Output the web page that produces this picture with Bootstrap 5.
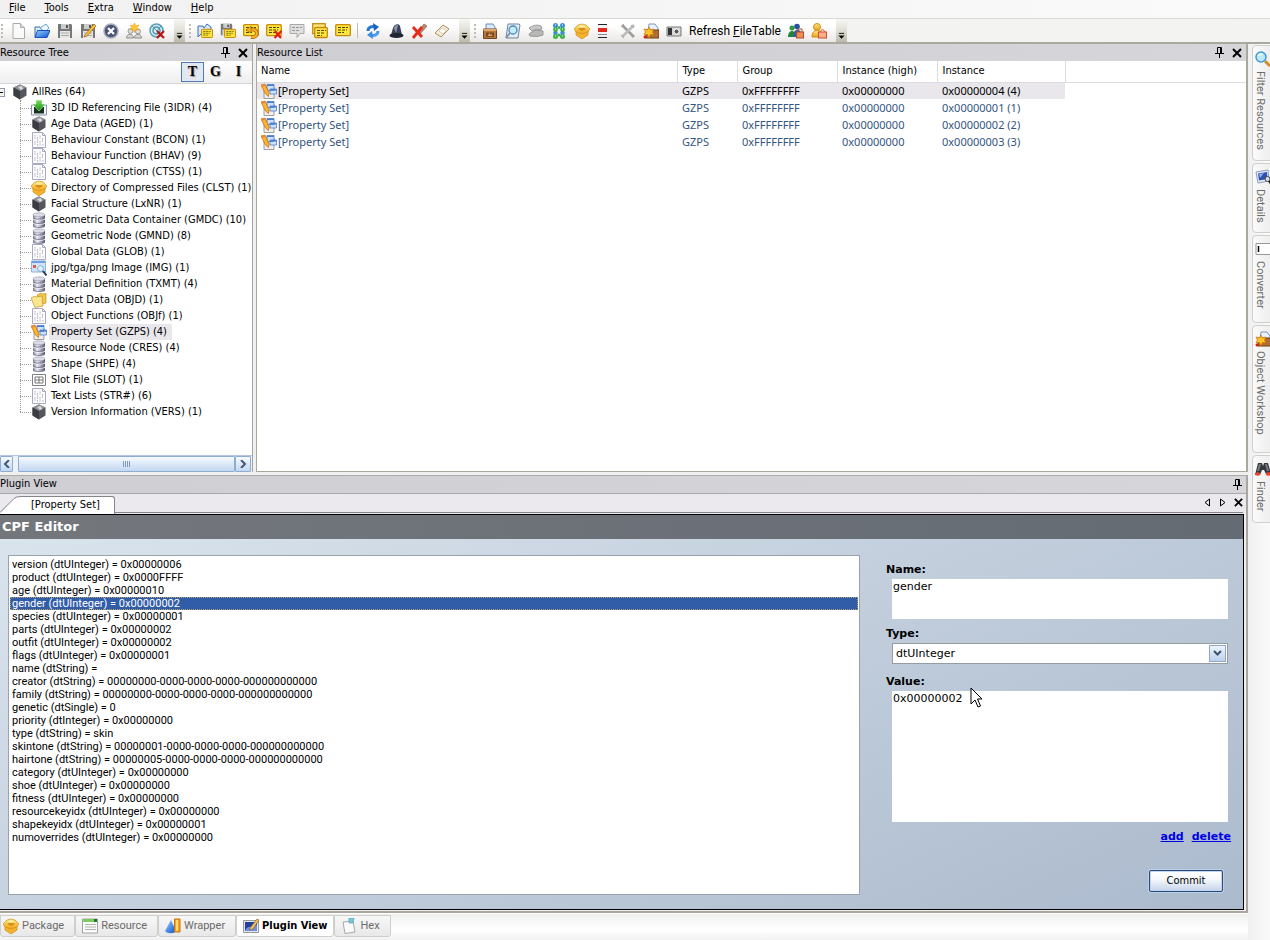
<!DOCTYPE html>
<html lang="en">
<head>
<meta charset="utf-8">
<meta name="viewport" content="width=device-width, initial-scale=1">
<title>Package editor</title>
<link rel="stylesheet" href="https://cdn.jsdelivr.net/npm/bootstrap@5.3.0/dist/css/bootstrap.min.css">
<style>
:root{--tahoma:"DejaVu Sans Condensed","DejaVu Sans",sans-serif;--gothic:Roboto,"Liberation Sans",sans-serif;--verdana:"DejaVu Sans",sans-serif}
body{font:11px/16px var(--tahoma);color:#000;background:#f1f0f0;overflow:hidden}
button{border:0;background:none;padding:0;color:inherit;font:inherit}
svg{display:block;flex:none}
.ico{width:16px;height:16px}
.menubar{height:18px;background:linear-gradient(90deg,#f2f1f1,#fafafa);padding:0 9px;gap:19px;line-height:15px}
.menubar a,.menubar a:hover{color:#000;text-decoration:none}
.tools{height:26px;background:linear-gradient(#fff 30%,#f6f5f4 60%,#e9e8e6);border-top:1px solid #d8d8d5;border-bottom:2px solid #aaa9a0}
.rest{background:#f3f3f2}
.tbtn{width:23px;height:23px;display:flex;align-items:center;justify-content:center}
.tbtn.wide{width:99px;font:12px/16px var(--gothic);justify-content:flex-start;padding-left:4px;white-space:nowrap}
.grip{width:5px;align-self:center;height:14px;background:repeating-linear-gradient(#bdbdbb 0 2px,transparent 2px 4px);background-size:2px 14px;background-repeat:no-repeat;background-position:1px 0}
.grip.near{margin:0 2px 0 0}
.rule{width:1px;height:15px;background:#bcbcb8;align-self:center;margin:0 3px}
.more{width:11px;height:23px;background:linear-gradient(#f6f6f2,#deddd4 55%,#bbb9aa);display:flex;align-items:flex-end;justify-content:center;padding-bottom:2px;margin:0 3px 0 6px}
.upper{flex:429 1 0;gap:3px;min-height:0}
.lower{flex:437 1 0;min-height:0;margin-top:3px;border-top:1px solid #aeada5;border-right:2px solid #aaa69f;border-bottom:2px solid #aaa69f}
.treepane{flex:0 0 253px;border-right:1px solid #a5a59c;background:#fff}
.listpane{border:1px solid #a9a89d;border-width:0 2px 1px 1px;background:#fff}
.caption{height:17px;background:linear-gradient(90deg,#cfced3,#d6d5d9);line-height:16px;flex:none}
.treebar{height:23px;background:linear-gradient(#fff,#efeef0);border-bottom:1px solid #d5d4d8;flex:none;padding-right:2px}
.letter{width:23px;height:20px;font:bold 14px/18px "Liberation Serif",serif;text-shadow:1px 1px 1px #999}
.letter.on{border:1px solid #5179ad;background:#e2e8f2}
.tree{padding-top:0;line-height:16px;white-space:nowrap}
.tree ul{position:relative}
.tree .root{padding-left:12px}
.tree .kids li{display:flex;padding-left:31px;position:relative;height:16px}
.tree .kids li::before{content:"";position:absolute;left:20px;width:11px;top:8px;border-top:1px dotted #999}
.tree .kids::before{content:"";position:absolute;left:20px;top:0;bottom:8px;border-left:1px dotted #999}
.tree a,.tree a:hover{color:#000;text-decoration:none;padding:0 5px 0 2px;margin-left:2px}
.tree a.on{background:#e9e7eb}
.box{width:9px;height:9px;border:1px solid #8c99ac;background:#f4f4f0;position:absolute;left:-4px;top:4px}
.box::after{content:"";position:absolute;left:1px;right:1px;top:3px;border-top:1px solid #000}
.hbar{height:17px;background:#edf1f8;border-top:1px solid #b7c6db;flex:none;padding-right:1px}
.hbar button{border:1px solid #8eabd0;background:linear-gradient(#f6faff,#c3d7f1);border-radius:1px;display:flex;align-items:center;justify-content:center}
.hbar .end{width:16px}
.hbar .first{width:13px;margin-right:5px}
.rtable{table-layout:fixed;width:100%;font:11px/17px "Noto Sans",sans-serif;color:#33557f;white-space:nowrap}
.rtable th{font:11px/20px var(--tahoma);color:#000;height:21px;padding:0 0 0 5px;border-bottom:1px solid #dcdbdd;border-right:1px solid #dcdbdd}
.rtable th:first-child,.rtable td:first-child{padding-left:4px}
.rtable th:last-child{border-right:0}
.rtable td{height:17px;padding:0 0 0 5px;line-height:16px}
.rtable tr.on td:not(:last-child){background:#e9e7eb;color:#000}
.rtable .cell{gap:1px}
.doctabs{height:21px;background:#ebe9ed;border-top:1px solid #a9a8ae;flex:none;padding-right:3px}
.doctabs .line{border-bottom:1px solid #85848a;height:19px}
.tabface{background:#fff;border:1px solid #85848a;border-width:1px 1px 0 0;border-radius:0 3px 0 0;height:18px;line-height:16px;width:94px;padding-left:10px;margin-top:2px;text-align:left;display:block}
.editor{border:1px solid #000;border-left:0;margin:0 2px 1px 0;background:linear-gradient(155deg,#dbe5ee,#c2cedc 50%,#abbacd);min-height:0}
.editor h1{font:bold 13px/24px var(--verdana);color:#fff;background:linear-gradient(90deg,#73777c,#6b7078 60%,#646b73);margin:0;padding-left:2px;height:24px}
.work{padding:16px 12px 14px 8px;gap:26px;min-height:0}
.props{border:1px solid #9aa2ab;background:#fff;padding:2px 1px;font:11px/13px var(--gothic);overflow:hidden;margin:0}
.props li{padding-left:2px;height:13px;white-space:pre}
.props li.on{background:#315da8;color:#fff;outline:1px dotted #b3a16d;outline-offset:-1px}
.fields{flex:0 0 344px;font:11px/14px var(--verdana);padding-top:8px}
.fields label{font-weight:bold;height:16px;display:block}
.fields textarea,.fields .combo{margin:0 3px 0 6px;display:block;width:336px;border:0;background:#fff;resize:none;padding:1px 1px;font:11px/13px var(--verdana);border-radius:0;color:#000;outline:0}
.fields .combo{border:1px solid #969ca4;height:21px;display:flex;padding:0;margin-bottom:11px}
.fields .short{height:40px;margin-bottom:8px}
.fields .tall{height:131px;margin-bottom:8px}
.combo select{appearance:none;border:0;outline:0;background:#fff;flex:1;padding:0 3px;font:inherit;min-width:0}
.combo span{width:17px;margin:1px;border:1px solid #90a9ca;background:linear-gradient(#eef4fc,#bcd0ea);display:flex;align-items:center;justify-content:center}
.fields .links{gap:8px;font-weight:bold}
.fields .links a{color:#0000e6}
.commit{width:74px;height:22px;margin:26px 8px 0 auto;border:1px solid #294a7c;border-radius:2px;background:linear-gradient(#fff,#f6f9fd 40%,#c5d3e8);box-shadow:inset 0 0 0 1px #c3d5ef,0 0 0 1px #bfcfe3;font:11px/18px var(--tahoma)}
.views{height:27px;background:linear-gradient(#f0f0f0,#fff 60%,#f2f2f2);flex:none;border-top:1px solid #fff}
.views button,.side button{color:#6b6b6b;background:linear-gradient(#f7f7f7,#f0f0f0 50%,#e8e8e8);border:1px solid #cfcfcb;font:11px/16px var(--gothic)}
.views button{height:22px;margin:1px 0 0;display:flex;align-items:center;gap:3px;border-radius:0 0 3px 3px;padding:0 10px 0 6px;white-space:nowrap}
.views button:first-child{padding-left:2px}
.views button.on{background:#fff;color:#000;font:bold 11px/16px var(--tahoma);padding-right:6px}
.side{flex:0 0 22px;overflow:hidden;padding:1px 0 0 4px;background:linear-gradient(90deg,#f0f0f0,#fafafa)}
.side button{width:26px;border-radius:4px 0 0 4px;display:flex;flex-direction:column;align-items:flex-start;padding:5px 0 0 2px;gap:4px;margin-bottom:2px;background:linear-gradient(90deg,#fafafa,#e9e9e9)}
.side span{writing-mode:vertical-rl;line-height:13px;white-space:nowrap;margin-left:-1px}
.pointer{position:absolute;left:84px;top:12px}
</style>
</head>
<body class="d-flex flex-column vh-100">

<svg width="0" height="0" class="position-absolute" aria-hidden="true">
<defs>
<linearGradient id="gy" x2="0" y2="1"><stop stop-color="#ffe884"/><stop offset="1" stop-color="#f0a018"/></linearGradient>
<linearGradient id="gb" x2="1" y2="1"><stop stop-color="#9fd4ff"/><stop offset="1" stop-color="#0a50d0"/></linearGradient>
<linearGradient id="gc"><stop stop-color="#77778f"/><stop offset=".35" stop-color="#f0f0f8"/><stop offset="1" stop-color="#55556e"/></linearGradient>
<linearGradient id="gg" x2="0" y2="1"><stop stop-color="#7be05a"/><stop offset="1" stop-color="#0f8a10"/></linearGradient>
</defs>
<symbol id="new" viewBox="0 0 16 16"><path d="M2 .5h7.5l4 4v11H2z" fill="#fafafa" stroke="#aaa"/><path d="M9.500 .5v4h4" fill="#e4e4e4" stroke="#aaa"/></symbol>
<symbol id="open" viewBox="0 0 16 16"><path d="M1 14V4h5l1 2h6v8z" fill="#dceaf8" stroke="#3970ae"/><path d="M6 5l6-4 3 4-4 4z" fill="#eef6ff" stroke="#6aa2d8"/><path d="M1 14.500l2.500-7H16l-3 7z" fill="url(#gb)" stroke="#1550b8"/></symbol>
<symbol id="save" viewBox="0 0 16 16"><path d="M1 1h13l1 1v13H1z" fill="#777"/><path d="M4 1h8v5H4z" fill="#ccc"/><path d="M9 2h2v3H9z" fill="#555"/><path d="M3 8h10v7H3z" fill="#e6e6e6"/><path d="M4 10h8M4 12.500h8" stroke="#aaa"/></symbol>
<symbol id="saveas" viewBox="0 0 16 16"><use href="#save"/><path d="M5 12L14 1l2 2-9 10-3 1z" fill="#ffc13a" stroke="#9a6410" stroke-width=".7"/></symbol>
<symbol id="stop" viewBox="0 0 16 16"><circle cx="8" cy="8" r="7" fill="#4c5576" stroke="#a8aebc" stroke-width="1.500"/><path d="M5 5l6 6M11 5l-6 6" stroke="#fff" stroke-width="2.200"/></symbol>
<symbol id="users" viewBox="0 0 16 16"><circle cx="4.500" cy="8" r="2.500" fill="#ddd" stroke="#999"/><circle cx="12" cy="8.500" r="2.500" fill="#ddd" stroke="#999"/><path d="M.5 15c0-5 7-5 7 0zM8.500 15c0-5 7-5 7 0z" fill="#d4d4d4" stroke="#8f8f8f"/><path d="M8.500 0l1.300 2.600 3-.6-1.600 2.500 1.600 2.500-3-.4L8.500 9.500 7.200 6.600l-3 .4 1.600-2.500L4.200 2l3 .6z" fill="#ffc62e" stroke="#e89a18" stroke-width=".5"/></symbol>
<symbol id="target" viewBox="0 0 16 16"><circle cx="7.500" cy="7.500" r="6.500" fill="#d5edf5" stroke="#5d9fb6" stroke-width="1.500"/><circle cx="7.500" cy="7.500" r="3.500" fill="none" stroke="#4a98b5" stroke-width="1.500"/><path d="M3 3l5 5 4-5" fill="none" stroke="#5b8fa2"/><path d="M8 8l7 7M15 8l-7 7" stroke="#b81414" stroke-width="2.200"/></symbol>
<symbol id="nt" viewBox="0 0 16 16"><rect x=".7" y="1.700" width="14.600" height="11" rx="1" fill="#ffe63a" stroke="#c78a10" stroke-width="1.300"/><path d="M3 4.500h10M3 7h9M3 9.500h6" stroke="#4f4400" stroke-dasharray="3 1"/></symbol>
<symbol id="ntopen" viewBox="0 0 16 16"><path d="M1 14V3h5l1 2 3-4 4 3v6H5z" fill="#d8e8fa" stroke="#3e6db0"/><svg x="4" y="5" width="12" height="12"><use href="#nt"/></svg></symbol>
<symbol id="ntsave" viewBox="0 0 16 16"><svg width="13" height="13"><use href="#save"/></svg><svg x="4" y="5" width="12" height="12"><use href="#nt"/></svg></symbol>
<symbol id="ntback" viewBox="0 0 16 16"><use href="#nt"/><path d="M8 14c5 1 7-3 5-6-2-2-4-2-6-1" fill="none" stroke="#a05c08" stroke-width="3.600"/><path d="M8 14c5 1 7-3 5-6-2-2-4-2-6-1" fill="none" stroke="#f8b020" stroke-width="2.200"/><path d="M8 3v7L3 7z" fill="#f8b020" stroke="#a05c08" stroke-width=".6"/></symbol>
<symbol id="ntdel" viewBox="0 0 16 16"><use href="#nt"/><path d="M9 8l6 7M15.500 8l-7 7" stroke="#e01c10" stroke-width="2.200"/></symbol>
<symbol id="ntgray" viewBox="0 0 16 16"><path d="M1 1.500h14v9h-4l-3 4v-4H1z" fill="#e0e0e0" stroke="#aaa"/><path d="M3 4.500h10M3 7.500h8" stroke="#999" stroke-dasharray="3 1"/></symbol>
<symbol id="nts" viewBox="0 0 16 16"><rect x=".7" y=".7" width="12.500" height="10" fill="#ffe97a" stroke="#c78a10" stroke-width="1.300"/><rect x="2.700" y="4.500" width="12.600" height="10" rx="1" fill="#ffe63a" stroke="#c78a10" stroke-width="1.300"/><path d="M5 7.500h9M5 10h7M5 12.500h5" stroke="#4f4400" stroke-dasharray="3 1"/></symbol>
<symbol id="sync" viewBox="0 0 16 16"><path d="M3 8c0-4 4-5 7-4" fill="none" stroke="#2777d8" stroke-width="3"/><path d="M8 0l6 4-5 4z" fill="#1b62c8"/><path d="M13 8c0 4-4 5-7 4" fill="none" stroke="#4c9bee" stroke-width="3"/><path d="M8 16l-6-4 5-4z" fill="#3b8be2"/></symbol>
<symbol id="hat" viewBox="0 0 16 16"><path d="M3 12L5 5c1-4 6-5 7-2l2 9z" fill="#39405a"/><path d="M6 5c1-3 3-3 4-3L8 10z" fill="#8d94ab"/><ellipse cx="8.500" cy="12.500" rx="7" ry="2.500" fill="#1f2433"/></symbol>
<symbol id="cut" viewBox="0 0 16 16"><path d="M6 10L13 1l3 2-7 8z" fill="#b98a6c" stroke="#77543c" stroke-width=".6"/><path d="M2 4l9 10M11 4L2 15" stroke="#e62a1c" stroke-width="2.800"/></symbol>
<symbol id="eraser" viewBox="0 0 16 16"><path d="M1 10l8-8 6 4-8 8z" fill="#f4ead8" stroke="#b08c5c"/><path d="M5 8l3-3 4 3-3 3z" fill="#fff" stroke="#c9b18d" stroke-width=".6"/></symbol>
<symbol id="crate" viewBox="0 0 16 16"><path d="M4 1h7l2 3v4H4z" fill="#dbeafa" stroke="#6c90b8"/><path d="M1.500 6h13v9.500h-13z" fill="#b5783e" stroke="#70431c"/><path d="M1.500 6h13v2h-13z" fill="#e0a868"/><path d="M4 9.500h8V14H4z" fill="#7d4a1d"/><path d="M5.500 13l2-3 1 2 1-1 1 2z" fill="#d8a56a"/></symbol>
<symbol id="preview" viewBox="0 0 16 16"><path d="M3 1h11l1 1-2 13H1z" fill="#e4ecf4" stroke="#6d85a2"/><circle cx="8" cy="7" r="4" fill="#c5ecfb" stroke="#4789bc" stroke-width="1.300"/><path d="M5 10l-4 5" stroke="#8093aa" stroke-width="2"/></symbol>
<symbol id="phone" viewBox="0 0 16 16"><path d="M1 5c3-2 7-4 12-2l1 3-4 1-2-1-4 2z" fill="#c8c8c8" stroke="#999"/><path d="M1 11l6-4 8 1v4l-6 1.500-7-.5z" fill="#b8b8b8" stroke="#969696"/></symbol>
<symbol id="beads" viewBox="0 0 16 16"><g fill="#3a8ee2"><circle cx="4.500" cy="2.500" r="2.500"/><circle cx="11.500" cy="2.500" r="2.500"/><circle cx="4.500" cy="10" r="2.300"/><circle cx="11.500" cy="10" r="2.300"/></g><g fill="#39b04a"><circle cx="4.500" cy="6.500" r="2.400"/><circle cx="11.500" cy="6.500" r="2.400"/><circle cx="4.500" cy="13.500" r="2.500"/><circle cx="11.500" cy="13.500" r="2.500"/><circle cx="8" cy="4.500" r="1.500"/><circle cx="8" cy="12" r="1.500"/></g><path d="M4 2h1M11 2h1M4 6h1M11 6h1M4 13h1M11 13h1" stroke="#fff"/></symbol>
<symbol id="pack" viewBox="0 0 16 16"><path d="M2 7l6 3 6-3v5l-6 4-6-4z" fill="#f7b32c" stroke="#c98a1c" stroke-width=".7"/><path d="M4 2l4-1 4 1 4 4-2 3-6 2-6-2-2-3z" fill="url(#gy)" stroke="#d2921c" stroke-width=".7"/><path d="M4 6l4-2.500L12 6 8 8z" fill="#d58e14"/><path d="M4 4l4-2 4 2-4 1z" fill="#fff0a4"/></symbol>
<symbol id="bars" viewBox="0 0 16 16"><path d="M1 1h9v14H1z" fill="#f2f2f6"/><path d="M1 1.500h9M1 14.500h9" stroke="#222"/><path d="M1 5h9v4H1z" fill="#e22818"/><path d="M1 11.500h9" stroke="#888"/></symbol>
<symbol id="fix" viewBox="0 0 16 16"><path d="M2 2l12 12" stroke="#9d9d9d" stroke-width="2.600"/><path d="M14 2L2 14" stroke="#bcbcbc" stroke-width="2.600"/><path d="M1 4l3-3M11 2l3 3M1 12l3 3" stroke="#aaa"/></symbol>
<symbol id="shop" viewBox="0 0 16 16"><path d="M6 1h6l3 4v4H5z" fill="#e7f1fb" stroke="#8096b0"/><path d="M3 7h13v8H3z" fill="#b06f30" stroke="#6f4115"/><path d="M6 4l1.500 3 3.500-1-1.500 3 1.500 3-3.500-.5L6 15l-1.500-3.500L1 12l1.500-3L1 6l3.500 1z" fill="#ffc524" stroke="#cc6a0c" stroke-width=".7"/><circle cx="2" cy="14" r="1.500" fill="#e01c10"/></symbol>
<symbol id="camera" viewBox="0 0 16 16"><path d="M1 4h14v9H1z" fill="#d6d6d6" stroke="#777"/><path d="M2 5h4v7H2z" fill="#333"/><circle cx="10.500" cy="8.500" r="2.500" fill="#555" stroke="#fff"/></symbol>
<symbol id="people" viewBox="0 0 16 16"><circle cx="4" cy="5" r="2.500" fill="#2f9a3e"/><circle cx="9" cy="3.500" r="2.800" fill="#27529c"/><path d="M0 14c0-8 8-8 8 0z" fill="#23872f"/><path d="M5 14c0-10 9-9 9 0z" fill="#325ea8"/><rect x="8.500" y="9" width="7" height="6" fill="#ef8d5a" stroke="#b04a22"/><path d="M10 9V6h4v3" fill="none" stroke="#a35337"/></symbol>
<symbol id="person" viewBox="0 0 16 16"><circle cx="6" cy="4" r="3.500" fill="url(#gy)" stroke="#cf8d14"/><path d="M1 14c0-9 10-9 10 0z" fill="url(#gy)" stroke="#cf8d14"/><rect x="7.500" y="9" width="8" height="6" fill="#f7b08c" stroke="#cf4d26"/><path d="M9.500 9c0-3 4-3 4 0" fill="none" stroke="#cf4d26"/></symbol>
<symbol id="chev" viewBox="0 0 8 8"><path d="M1 1h6" stroke="#000"/><path d="M.5 3.500h7L4 7z"/></symbol>
<symbol id="cube" viewBox="0 0 16 16"><path d="M8 .5l6.500 3v8L8 15.500l-6.500-4v-8z" fill="#55565c"/><path d="M8 .5l6.500 3L8 7 1.500 3.500z" fill="#8f9198"/><path d="M1.500 3.500L8 7v8.500l-6.500-4z" fill="#3c3d42"/><path d="M6 3l4-1 1 3-2 1z" fill="#d8d9de"/></symbol>
<symbol id="import" viewBox="0 0 16 16"><path d="M.5 5h15v10H.5z" fill="#f4f6fa" stroke="#8a90a8"/><path d="M3 7h10v6.500H3z" fill="#17341d"/><path d="M5 0h6v4h3.500L8 11 1.500 4H5z" fill="url(#gg)" stroke="#fff" stroke-width=".5"/></symbol>
<symbol id="sheet" viewBox="0 0 16 16"><path d="M1.500 .5h10l3 3v12h-13z" fill="#fbfbfd" stroke="#a9a9c2"/><path d="M11.500 .5v3h3" fill="none" stroke="#a9a9c2"/><path d="M4 3v4M6.500 5v6M9 3.500v3M11.500 6v4M4 9v4M9 9v5M6.500 12v2M12 12v2" stroke="#b5b5bf" stroke-dasharray="1.500 .7"/></symbol>
<symbol id="disks" viewBox="0 0 16 16"><g fill="url(#gc)"><path d="M2 3v3c0 2 12 2 12 0V3zM2 7v3.500c0 2 12 2 12 0V7zM2 11v3c0 2.300 12 2.300 12 0v-3z"/></g><ellipse cx="8" cy="2.800" rx="6" ry="2" fill="#dcdce8" stroke="#8a8a9c" stroke-width=".5"/><path d="M2 7c2 1.500 10 1.500 12 0M2 11.200c2 1.500 10 1.500 12 0" fill="none" stroke="#efeff6"/><path d="M2 6c2 1.500 10 1.500 12 0M2 10.300c2 1.500 10 1.500 12 0M2 14.300c2 1.500 10 1.500 12 0" fill="none" stroke="#6c6c86" stroke-width=".8"/></symbol>
<symbol id="image" viewBox="0 0 16 16"><path d="M.5 1h14v11H.5z" fill="#cfe4fa" stroke="#8fb2de"/><path d="M1 1h13v2H1z" fill="#6f9fdf"/><path d="M2 5h3v3H2z" fill="#e25d4e"/><path d="M6 5h6v3H6z" fill="#f6fbff"/><circle cx="9.500" cy="8.500" r="3" fill="#dff3fd" stroke="#7ba5cb"/><path d="M12 11l3.500 4.500" stroke="#243b66" stroke-width="2"/></symbol>
<symbol id="folders" viewBox="0 0 16 16"><path d="M6 3l4-2 1 1 4-.5V11l-4 1z" fill="#f2c84a" stroke="#c29024" stroke-width=".7"/><path d="M0 6l4-2 1 1 6-1 1 10-8 1.500z" fill="#fae68c" stroke="#c29024" stroke-width=".7"/></symbol>
<symbol id="prop" viewBox="0 0 16 16"><path d="M3 4h10v11.500H3z" fill="#efefef" stroke="#888" stroke-width=".8"/><path d="M6 1.500h7v6H6zM9 6h6.500v5H9z" fill="#cfe2fa" stroke="#4f7fc6" stroke-width=".8"/><path d="M6 1.500h7v1.500H6zM9 6h6.500v1.500H9z" fill="#4a7ed0"/><path d="M0 2l4-1 4 9-.5 3.500L4.500 11z" fill="#ffb52a" stroke="#c1640c" stroke-width=".7"/><path d="M0 2l4-1 .8 1.500L1 4z" fill="#e88a3a"/></symbol>
<symbol id="grid" viewBox="0 0 16 16"><path d="M1.500 2.500h13v11h-13z" fill="#fff" stroke="#7f7f8c"/><path d="M4 5h8v6H4zM8 5v6M4 8h8" fill="none" stroke="#777"/></symbol>
<symbol id="lens" viewBox="0 0 16 16"><path d="M10 10l5 5" stroke="#d08b24" stroke-width="3"/><circle cx="6" cy="6" r="5" fill="#bfe8fb" stroke="#3d9bd6" stroke-width="1.500"/><path d="M3 5c1-2 3-2 4-2" stroke="#fff" fill="none" stroke-width="1.500"/></symbol>
<symbol id="detail" viewBox="0 0 16 16"><path d="M1 3l12-2 1 11-11 2z" fill="#e8eef8" stroke="#8b9dc2"/><path d="M3 4.500l9-1.500.6 7-8.600 1.500z" fill="#2f4fae"/><path d="M4 5l5-1-4 5z" fill="#92aae6"/><circle cx="12.500" cy="10" r="2.500" fill="#dde" stroke="#444"/><path d="M14 12l2 3" stroke="#222" stroke-width="2"/></symbol>
<symbol id="conv" viewBox="0 0 16 16"><path d="M1 13.500v-11h17v11z" fill="#fff" stroke="#999"/><path d="M3.500 5v6" stroke="#000" stroke-width="1.500"/></symbol>
<symbol id="bino" viewBox="0 0 16 16"><path d="M3 2h4l1 3 1-3h4l3 11h-5L9 9H7l-2 5H0z" fill="#36383e"/><path d="M4 3h2l-2 7H2zM10 3h2l2 7h-2z" fill="#777b84"/><ellipse cx="2.800" cy="13" rx="2.500" ry="1.800" fill="#e8452a"/><ellipse cx="13.200" cy="13" rx="2.500" ry="1.800" fill="#e8452a"/></symbol>
<symbol id="res" viewBox="0 0 16 16"><path d="M.5 1h15v14H.5z" fill="#fafafa" stroke="#a4a4a4"/><path d="M1 1h14v3H1z" fill="#7ccc60"/><path d="M12 1h3v3h-3z" fill="#1a7c1c"/><path d="M3 6.500h11M3 9h11M3 11.500h11" stroke="#b4b4b4"/></symbol>
<symbol id="wrap" viewBox="0 0 16 16"><path d="M6 2l5 11c-2 3-9 3-11 0z" fill="url(#gb)"/><path d="M9.500 1H15v13H9.500z" fill="#f9a41c" stroke="#c9700c"/><path d="M11 2h2v11h-2z" fill="#ffdc7a"/></symbol>
<symbol id="plug" viewBox="0 0 16 16"><path d="M.5 2.500h15v12H.5z" fill="#e4e4ea" stroke="#999"/><path d="M2 4h12v9H2z" fill="#243f9f"/><path d="M2 13c2-6 5-3 12-6v6z" fill="#6f8fe0"/><path d="M7 10l7-9 2 1-6 9-3 1z" fill="#f2c35a" stroke="#86591a" stroke-width=".6"/></symbol>
<symbol id="hex" viewBox="0 0 16 16"><path d="M2 4l10-1 2 11-10 1.500z" fill="#fafafa" stroke="#a8a8a8"/><path d="M8 0h5l-1 5H8z" fill="#7bc6d8" stroke="#4b9bb2" stroke-width=".6"/></symbol>
<symbol id="pin" viewBox="0 0 9 11"><path d="M2.500 6.500v-6h4v6M0 6.500h9M4.500 6.500V11M5.500 1v5" fill="none" stroke="#000"/></symbol>
<symbol id="close" viewBox="0 0 10 10"><path d="M1 1l8 8M9 1L1 9" stroke="#000" stroke-width="2"/></symbol>
</svg>

<nav class="menubar d-flex flex-shrink-0" aria-label="Main menu">
<a href="#"><u>F</u>ile</a><a href="#"><u>T</u>ools</a><a href="#"><u>E</u>xtra</a><a href="#"><u>W</u>indow</a><a href="#"><u>H</u>elp</a>
</nav>

<div class="tools d-flex flex-shrink-0" role="toolbar" aria-label="Tools">
<span class="grip near"></span>
<button class="tbtn" aria-label="New"><svg class="ico"><use href="#new"/></svg></button>
<button class="tbtn" aria-label="Open"><svg class="ico"><use href="#open"/></svg></button>
<button class="tbtn" aria-label="Save"><svg class="ico"><use href="#save"/></svg></button>
<button class="tbtn" aria-label="Save as"><svg class="ico"><use href="#saveas"/></svg></button>
<button class="tbtn" aria-label="Close package"><svg class="ico"><use href="#stop"/></svg></button>
<button class="tbtn" aria-label="New neighbours"><svg class="ico"><use href="#users"/></svg></button>
<button class="tbtn" aria-label="Clear target"><svg class="ico"><use href="#target"/></svg></button>
<button class="more" aria-label="More"><svg width="7" height="8"><use href="#chev"/></svg></button>
<span class="grip"></span>
<button class="tbtn" aria-label="Open note"><svg class="ico"><use href="#ntopen"/></svg></button>
<button class="tbtn" aria-label="Save note"><svg class="ico"><use href="#ntsave"/></svg></button>
<button class="tbtn" aria-label="Restore note"><svg class="ico"><use href="#ntback"/></svg></button>
<button class="tbtn" aria-label="Delete note"><svg class="ico"><use href="#ntdel"/></svg></button>
<button class="tbtn" aria-label="Comment"><svg class="ico"><use href="#ntgray"/></svg></button>
<button class="tbtn" aria-label="Copy note"><svg class="ico"><use href="#nts"/></svg></button>
<button class="tbtn" aria-label="Note"><svg class="ico"><use href="#nt"/></svg></button>
<span class="rule"></span>
<button class="tbtn" aria-label="Refresh"><svg class="ico"><use href="#sync"/></svg></button>
<button class="tbtn" aria-label="Hat"><svg class="ico"><use href="#hat"/></svg></button>
<button class="tbtn" aria-label="Remove"><svg class="ico"><use href="#cut"/></svg></button>
<button class="tbtn" aria-label="Erase"><svg class="ico"><use href="#eraser"/></svg></button>
<button class="more" aria-label="More"><svg width="7" height="8"><use href="#chev"/></svg></button>
<span class="grip"></span>
<button class="tbtn" aria-label="Crate"><svg class="ico"><use href="#crate"/></svg></button>
<button class="tbtn" aria-label="Preview"><svg class="ico"><use href="#preview"/></svg></button>
<button class="tbtn" aria-label="Phone"><svg class="ico"><use href="#phone"/></svg></button>
<button class="tbtn" aria-label="Genetics"><svg class="ico"><use href="#beads"/></svg></button>
<button class="tbtn" aria-label="Package"><svg class="ico"><use href="#pack"/></svg></button>
<button class="tbtn" aria-label="Career"><svg class="ico"><use href="#bars"/></svg></button>
<button class="tbtn" aria-label="Fix"><svg class="ico"><use href="#fix"/></svg></button>
<button class="tbtn" aria-label="Workshop"><svg class="ico"><use href="#shop"/></svg></button>
<button class="tbtn" aria-label="Camera"><svg class="ico"><use href="#camera"/></svg></button>
<button class="tbtn wide">Refresh&nbsp;<u>F</u>ileTable</button>
<button class="tbtn" aria-label="Neighbours"><svg class="ico"><use href="#people"/></svg></button>
<button class="tbtn" aria-label="Sim"><svg class="ico"><use href="#person"/></svg></button>
<button class="more me-0" aria-label="More"><svg width="7" height="8"><use href="#chev"/></svg></button>
<div class="rest flex-grow-1"></div>
</div>

<div class="d-flex flex-grow-1 overflow-hidden">
<main class="d-flex flex-column flex-grow-1 overflow-hidden">
<div class="upper d-flex">
<section class="treepane d-flex flex-column overflow-hidden">
<header class="caption d-flex align-items-center pe-1"><span class="me-auto">Resource Tree</span><button class="me-2" aria-label="Pin"><svg width="9" height="11"><use href="#pin"/></svg></button><button aria-label="Close"><svg width="10" height="10"><use href="#close"/></svg></button></header>
<div class="treebar d-flex align-items-center justify-content-end"><button class="letter on">T</button><button class="letter">G</button><button class="letter">I</button></div>
<ul class="tree list-unstyled flex-grow-1 m-0 overflow-hidden">
<li class="position-relative"><span class="box"></span><div class="root d-flex"><svg class="ico"><use href="#cube"/></svg><a href="#">AllRes (64)</a></div>
<ul class="kids list-unstyled">
<li><svg class="ico"><use href="#import"/></svg><a href="#">3D ID Referencing File (3IDR) (4)</a></li>
<li><svg class="ico"><use href="#cube"/></svg><a href="#">Age Data (AGED) (1)</a></li>
<li><svg class="ico"><use href="#sheet"/></svg><a href="#">Behaviour Constant (BCON) (1)</a></li>
<li><svg class="ico"><use href="#sheet"/></svg><a href="#">Behaviour Function (BHAV) (9)</a></li>
<li><svg class="ico"><use href="#sheet"/></svg><a href="#">Catalog Description (CTSS) (1)</a></li>
<li><svg class="ico"><use href="#pack"/></svg><a href="#">Directory of Compressed Files (CLST) (1)</a></li>
<li><svg class="ico"><use href="#cube"/></svg><a href="#">Facial Structure (LxNR) (1)</a></li>
<li><svg class="ico"><use href="#disks"/></svg><a href="#">Geometric Data Container (GMDC) (10)</a></li>
<li><svg class="ico"><use href="#disks"/></svg><a href="#">Geometric Node (GMND) (8)</a></li>
<li><svg class="ico"><use href="#sheet"/></svg><a href="#">Global Data (GLOB) (1)</a></li>
<li><svg class="ico"><use href="#image"/></svg><a href="#">jpg/tga/png Image (IMG) (1)</a></li>
<li><svg class="ico"><use href="#disks"/></svg><a href="#">Material Definition (TXMT) (4)</a></li>
<li><svg class="ico"><use href="#folders"/></svg><a href="#">Object Data (OBJD) (1)</a></li>
<li><svg class="ico"><use href="#sheet"/></svg><a href="#">Object Functions (OBJf) (1)</a></li>
<li><svg class="ico"><use href="#prop"/></svg><a href="#" class="on">Property Set (GZPS) (4)</a></li>
<li><svg class="ico"><use href="#disks"/></svg><a href="#">Resource Node (CRES) (4)</a></li>
<li><svg class="ico"><use href="#disks"/></svg><a href="#">Shape (SHPE) (4)</a></li>
<li><svg class="ico"><use href="#grid"/></svg><a href="#">Slot File (SLOT) (1)</a></li>
<li><svg class="ico"><use href="#sheet"/></svg><a href="#">Text Lists (STR#) (6)</a></li>
<li><svg class="ico"><use href="#cube"/></svg><a href="#">Version Information (VERS) (1)</a></li>
</ul></li>
</ul>
<div class="hbar d-flex"><button class="first" aria-label="Scroll left"><svg width="8" height="8"><path d="M6 0L2 4l4 4" fill="none" stroke="#44587a" stroke-width="2"/></svg></button><button class="flex-grow-1" aria-label="Scroll thumb"><svg width="9" height="6"><path d="M1.500 0v6M3.500 0v6M5.500 0v6M7.500 0v6" stroke="#7f9cc4"/></svg></button><button class="end" aria-label="Scroll right"><svg width="8" height="8"><path d="M2 0l4 4-4 4" fill="none" stroke="#44587a" stroke-width="2"/></svg></button></div>
</section>
<section class="listpane flex-grow-1 overflow-hidden">
<header class="caption d-flex align-items-center pe-1"><span class="me-auto">Resource List</span><button class="me-2" aria-label="Pin"><svg width="9" height="11"><use href="#pin"/></svg></button><button aria-label="Close"><svg width="10" height="10"><use href="#close"/></svg></button></header>
<table class="rtable">
<colgroup><col style="width:420px"><col style="width:60px"><col style="width:100px"><col style="width:100px"><col style="width:128px"><col></colgroup>
<thead><tr><th>Name</th><th>Type</th><th>Group</th><th>Instance (high)</th><th>Instance</th><th></th></tr></thead>
<tbody>
<tr class="on"><td><div class="cell d-flex"><svg class="ico"><use href="#prop"/></svg>[Property Set]</div></td><td>GZPS</td><td>0xFFFFFFFF</td><td>0x00000000</td><td>0x00000004 (4)</td><td></td></tr>
<tr><td><div class="cell d-flex"><svg class="ico"><use href="#prop"/></svg>[Property Set]</div></td><td>GZPS</td><td>0xFFFFFFFF</td><td>0x00000000</td><td>0x00000001 (1)</td><td></td></tr>
<tr><td><div class="cell d-flex"><svg class="ico"><use href="#prop"/></svg>[Property Set]</div></td><td>GZPS</td><td>0xFFFFFFFF</td><td>0x00000000</td><td>0x00000002 (2)</td><td></td></tr>
<tr><td><div class="cell d-flex"><svg class="ico"><use href="#prop"/></svg>[Property Set]</div></td><td>GZPS</td><td>0xFFFFFFFF</td><td>0x00000000</td><td>0x00000003 (3)</td><td></td></tr>
</tbody>
</table>
</section>
</div>

<section class="lower d-flex flex-column">
<header class="caption d-flex align-items-center pe-1"><span class="me-auto">Plugin View</span><button aria-label="Pin"><svg width="9" height="11"><use href="#pin"/></svg></button></header>
<div class="doctabs d-flex">
<svg width="21" height="20"><path d="M0 20L14 4.500Q16 2.500 21 2.500V20z" fill="#fff"/><path d="M0 18.500L14 4.500Q16 2.500 21 2.500" fill="none" stroke="#85848a"/></svg>
<button class="tabface">[Property Set]</button>
<div class="line flex-grow-1 d-flex align-items-center justify-content-end gap-2"><button aria-label="Previous"><svg width="7" height="9"><path d="M5.500 1v7L1 4.500z" fill="none" stroke="#000"/></svg></button><button aria-label="Next"><svg width="7" height="9"><path d="M1.500 1v7L6 4.500z" fill="none" stroke="#000"/></svg></button><button aria-label="Close"><svg width="9" height="9"><use href="#close"/></svg></button></div>
</div>
<div class="editor d-flex flex-column flex-grow-1">
<h1>CPF Editor</h1>
<div class="work d-flex flex-grow-1">
<ul class="props list-unstyled flex-grow-1">
<li>version (dtUInteger) = 0x00000006</li>
<li>product (dtUInteger) = 0x0000FFFF</li>
<li>age (dtUInteger) = 0x00000010</li>
<li class="on">gender (dtUInteger) = 0x00000002</li>
<li>species (dtUInteger) = 0x00000001</li>
<li>parts (dtUInteger) = 0x00000002</li>
<li>outfit (dtUInteger) = 0x00000002</li>
<li>flags (dtUInteger) = 0x00000001</li>
<li>name (dtString) = </li>
<li>creator (dtString) = 00000000-0000-0000-0000-000000000000</li>
<li>family (dtString) = 00000000-0000-0000-0000-000000000000</li>
<li>genetic (dtSingle) = 0</li>
<li>priority (dtInteger) = 0x00000000</li>
<li>type (dtString) = skin</li>
<li>skintone (dtString) = 00000001-0000-0000-0000-000000000000</li>
<li>hairtone (dtString) = 00000005-0000-0000-0000-000000000000</li>
<li>category (dtUInteger) = 0x00000000</li>
<li>shoe (dtUInteger) = 0x00000000</li>
<li>fitness (dtUInteger) = 0x00000000</li>
<li>resourcekeyidx (dtUInteger) = 0x00000000</li>
<li>shapekeyidx (dtUInteger) = 0x00000001</li>
<li>numoverrides (dtUInteger) = 0x00000000</li>
</ul>
<form class="fields" onsubmit="return false">
<label for="fname">Name:</label>
<textarea id="fname" class="short">gender</textarea>
<label for="ftype">Type:</label>
<div class="combo"><select id="ftype"><option>dtUInteger</option></select><span><svg width="9" height="6"><path d="M1 1l3.500 3.500L8 1" fill="none" stroke="#3d506e" stroke-width="2"/></svg></span></div>
<div class="position-relative"><label for="fvalue">Value:</label>
<svg class="pointer" width="14" height="22"><path d="M1 1v16l4-4 3 7 2.500-1-3-7H12z" fill="#fff" stroke="#000"/></svg></div>
<textarea id="fvalue" class="tall">0x00000002</textarea>
<div class="links d-flex justify-content-end"><a href="#">add</a><a href="#">delete</a></div>
<button class="commit d-block">Commit</button>
</form>
</div>
</div>
</section>

<nav class="views d-flex" aria-label="Views">
<button><svg class="ico"><use href="#pack"/></svg>Package</button>
<button><svg class="ico"><use href="#res"/></svg>Resource</button>
<button><svg class="ico"><use href="#wrap"/></svg>Wrapper</button>
<button class="on"><svg class="ico"><use href="#plug"/></svg>Plugin View</button>
<button><svg class="ico"><use href="#hex"/></svg>Hex</button>
</nav>
</main>

<aside class="side" aria-label="Tool windows">
<button style="height:116px"><svg class="ico"><use href="#lens"/></svg><span>Filter Resources</span></button>
<button style="height:70px"><svg class="ico"><use href="#detail"/></svg><span>Details</span></button>
<button style="height:88px"><svg class="ico"><use href="#conv"/></svg><span>Converter</span></button>
<button style="height:128px"><svg class="ico"><use href="#shop"/></svg><span>Object Workshop</span></button>
<button style="height:68px"><svg class="ico"><use href="#bino"/></svg><span>Finder</span></button>
</aside>
</div>
<script src="https://cdn.jsdelivr.net/npm/bootstrap@5.3.0/dist/js/bootstrap.bundle.min.js"></script>
</body>
</html>
